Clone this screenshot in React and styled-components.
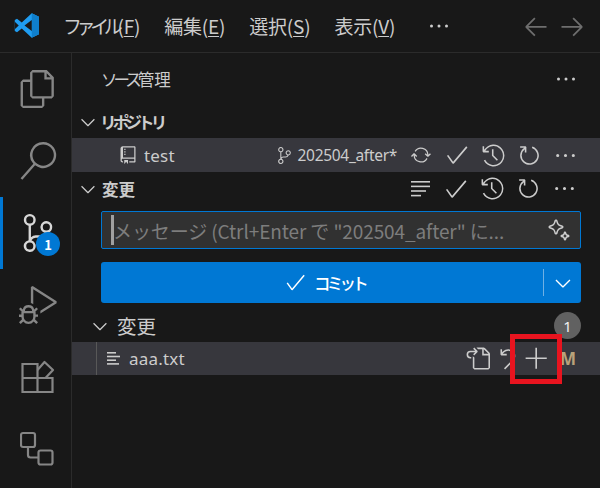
import React from 'react';
import styled, { createGlobalStyle } from 'styled-components';
import {
  VscFiles, VscSearch, VscSourceControl, VscDebugAlt, VscRepo, VscSync, VscCheck,
  VscHistory, VscRefresh, VscEllipsis, VscSparkle, VscGoToFile, VscDiscard, VscAdd, VscChevronDown,
  VscArrowLeft, VscArrowRight,
} from 'react-icons/vsc';

const Global = createGlobalStyle`
  html, body { margin: 0; padding: 0; background: #181818; }
  body { font-family: "Noto Sans CJK JP", "Noto Sans", sans-serif; color: #cccccc; }
  * { box-sizing: border-box; }
`;

const Window = styled.div`
  width: 600px; height: 488px; display: flex; flex-direction: column; overflow: hidden; background: #181818;
`;
const TitleBar = styled.header`
  height: 53px; flex: none; display: flex; align-items: center; padding: 0 14px 1px 14px;
  background: #181818; border-bottom: 1px solid #2b2b2b;
`;
const Menu = styled.nav`
  display: flex; align-items: center; gap: 24px; margin-left: 24px; flex: 1;
`;
const MenuItem = styled.span`
  font-size: 19px; letter-spacing: -0.2px; color: #cccccc; white-space: nowrap;
  u { text-underline-offset: 2px; text-decoration-thickness: 1px; }
`;
const Narrow = styled.span`
  letter-spacing: ${p => p.$track}px;
  margin-left: ${p => p.$pull || 0}px;
`;
const MenuDots = styled.span`
  display: flex; color: #cccccc; margin-left: 8px; font-size: 24px;
`;
const NavArrows = styled.div`
  display: flex; gap: 8px; color: #6e6e6e; font-size: 28px;
  svg { display: block; }
`;
const Body = styled.div`
  flex: 1; display: flex; min-height: 0;
`;
const ActivityBar = styled.aside`
  width: 72px; flex: none; display: flex; flex-direction: column; border-right: 1px solid #2b2b2b;
  background: #181818;
`;
const ActivityItem = styled.div`
  position: relative; height: 72px; flex: none; display: flex; align-items: center; justify-content: center;
  color: ${p => (p.$active ? '#d7d7d7' : '#868686')}; font-size: 38px;
  padding-left: 1px;
  border-left: 3px solid ${p => (p.$active ? '#0078d4' : 'transparent')};
  svg { display: block; }
`;
const ActivityBadge = styled.span`
  position: absolute; left: 33px; top: 35px; width: 24px; height: 24px; border-radius: 50%;
  background: #0078d4; color: #fff; font-size: 13px; font-weight: 700;
  display: flex; align-items: center; justify-content: center;
`;
const Sidebar = styled.main`
  position: relative; flex: 1; display: flex; flex-direction: column; min-width: 0;
`;
const PanelHeader = styled.div`
  height: 52px; flex: none; display: flex; align-items: center; justify-content: space-between;
  padding: 0 22px 0 29px; font-size: 16.5px; color: #cccccc;
`;
const Dots = styled.span`
  display: flex; font-size: 24px; color: #cccccc;
  svg { display: block; }
`;
const SectionHeader = styled.div`
  height: 33px; flex: none; display: flex; align-items: center; padding: 0 18px 0 5px;
  font-size: 16.5px; font-weight: 700; color: #cccccc;
`;
const Chevron = styled.span`
  display: flex; font-size: 22px; width: 25px; flex: none; color: #cccccc;
`;
const SectionTitle = styled.span`
  flex: 1; white-space: nowrap;
`;
const Row = styled.div`
  height: ${p => p.$h || 34}px; flex: none; display: flex; align-items: center; background: #37373d;
  padding-right: ${p => p.$pr || 18}px; color: #cccccc;
`;
const RepoIcon = styled.span`
  display: flex; font-size: 20px; margin-left: 46px; margin-right: 6px; color: #cccccc;
`;
const RowName = styled.span`
  font-family: "Noto Sans", sans-serif; font-size: 17px; letter-spacing: 0.2px; flex: 1; white-space: nowrap;
`;
const Branch = styled.span`
  display: flex; align-items: center; gap: 5px; font-family: "Noto Sans", sans-serif; font-size: 15.5px;
  letter-spacing: -0.3px; white-space: nowrap; margin-right: 6px;
`;
const IconGroup = styled.div`
  display: flex; align-items: center; flex: none;
`;
const IconCell = styled.span`
  width: ${p => p.$w || 36}px; height: 28px; display: flex; align-items: center; justify-content: center;
  font-size: ${p => p.$size || 25}px; color: #cccccc;
  svg { display: block; }
`;
const InputBox = styled.div`
  margin: 6px 19px 0 29px; height: 38px; flex: none; display: flex; align-items: center;
  background: #313131; border: 1px solid #0078d4; border-radius: 2px; padding: 0 9px;
`;
const Caret = styled.span`
  width: 3px; height: 30px; background: #a0a0a0; flex: none;
`;
const Placeholder = styled.span`
  flex: 1; margin-left: -1px; font-size: 19px; letter-spacing: -0.1px; color: #7d7d7d; white-space: nowrap; overflow: hidden;
`;
const Sparkle = styled.span`
  display: flex; font-size: 24px; color: #cccccc;
`;
const CommitButton = styled.div`
  margin: 13px 19px 0 29px; height: 41px; flex: none; display: flex; align-items: center;
  background: #0078d4; border-radius: 3px; color: #ffffff;
`;
const CommitMain = styled.div`
  flex: 1; display: flex; align-items: center; justify-content: center; gap: 7px; font-size: 16.5px;
  font-weight: 500; letter-spacing: -3.8px; padding-left: 5px;
  svg { font-size: 23px; display: block; }
`;
const Divider = styled.span`
  width: 1px; height: 27px; background: #6fb0e4; flex: none;
`;
const CommitChevron = styled.span`
  width: 37px; flex: none; display: flex; align-items: center; justify-content: center; font-size: 24px;
`;
const GroupHeader = styled.div`
  height: 33px; margin-top: 6px; flex: none; display: flex; align-items: center; padding: 0 0 0 17px;
  font-size: 19.5px; color: #cccccc;
`;
const GroupChevron = styled.span`
  display: flex; font-size: 22px; width: 28px; flex: none;
`;
const CountBadge = styled.span`
  position: absolute; left: 482px; top: 259px; width: 27px; height: 27px; border-radius: 50%;
  background: #616161; color: #f0f0f0; font-size: 15px; display: flex; align-items: center; justify-content: center;
  font-family: "Noto Sans", sans-serif;
`;
const IndentGuide = styled.span`
  align-self: stretch; width: 1px; background: #585858; margin-left: 24px; flex: none;
`;
const FileIcon = styled.span`
  display: flex; margin-left: 10px; margin-right: 9px; color: #cccccc;
`;
const StatusLetter = styled.span`
  width: 16px; margin-left: 8px; font-family: "Noto Sans", sans-serif; font-weight: 700; font-size: 17px; color: #b8a27a;
`;
const Highlight = styled.div`
  position: absolute; left: 438px; top: 281px; width: 52px; height: 50px; border: 5px solid #e8141f;
  pointer-events: none;
`;

const Lines = ({ w, h, sw, gap, cols }) => (
  <svg width={w} height={h} viewBox={`0 0 ${w} ${h}`} fill="none" stroke="currentColor" strokeWidth={sw}>
    {cols.map((c, i) => <line key={i} x1="0" x2={c} y1={sw / 2 + i * gap} y2={sw / 2 + i * gap} />)}
  </svg>
);

const Logo = () => (
  <svg width="25" height="25" viewBox="0 0 100 100">
    <path d="M71 99 L100 85 V15 L71 1 L31 38 L12 23 L3 28 V72 L12 77 L31 62 Z" fill="#1f9cf0" />
    <path d="M71 1 L100 15 V85 L71 99 Z" fill="#0f7fcc" />
    <path d="M71 28 V72 L42 50 Z M3 35 L19 50 L3 65 Z" fill="#181818" />
  </svg>
);

const Blocks = () => (
  <svg width="36" height="36" viewBox="0 0 36 36" fill="none" stroke="currentColor" strokeWidth="2.2">
    <path d="M2.5 5 H17.5 V33 H2.5 Z M2.5 19 H32.5 V33 H17.5" />
    <path d="M17.5 11 L24.5 3 L33 11 L25.5 19" strokeLinejoin="round" />
  </svg>
);

const Panels = () => (
  <svg width="36" height="36" viewBox="0 0 36 36" fill="none" stroke="currentColor" strokeWidth="2.2">
    <rect x="1" y="2" width="14" height="14" rx="2" />
    <rect x="18.5" y="19.5" width="14" height="14" rx="2" />
    <path d="M8 16 V24 Q8 26.5 10.5 26.5 H18.5" />
  </svg>
);

export default function App() {
  return (
    <Window>
      <Global />
      <TitleBar>
        <Logo />
        <Menu>
          <MenuItem><Narrow $track={-5.4}>ファイル</Narrow>(<u>F</u>)</MenuItem>
          <MenuItem>編集(<u>E</u>)</MenuItem>
          <MenuItem>選択(<u>S</u>)</MenuItem>
          <MenuItem>表示(<u>V</u>)</MenuItem>
          <MenuDots><VscEllipsis /></MenuDots>
        </Menu>
        <NavArrows><VscArrowLeft /><VscArrowRight /></NavArrows>
      </TitleBar>
      <Body>
        <ActivityBar>
          <ActivityItem><VscFiles /></ActivityItem>
          <ActivityItem><VscSearch /></ActivityItem>
          <ActivityItem $active>
            <VscSourceControl />
            <ActivityBadge>1</ActivityBadge>
          </ActivityItem>
          <ActivityItem><VscDebugAlt /></ActivityItem>
          <ActivityItem><Blocks /></ActivityItem>
          <ActivityItem><Panels /></ActivityItem>
        </ActivityBar>
        <Sidebar>
          <PanelHeader>
            <span><Narrow $track={-4}>ソース</Narrow>管理</span>
            <Dots><VscEllipsis /></Dots>
          </PanelHeader>
          <SectionHeader>
            <Chevron><VscChevronDown /></Chevron>
            <SectionTitle><Narrow $track={-3.8} $pull={-2}>リポジトリ</Narrow></SectionTitle>
          </SectionHeader>
          <Row $pr={17}>
            <RepoIcon><VscRepo /></RepoIcon>
            <RowName>test</RowName>
            <Branch><VscSourceControl size={17} />202504_after*</Branch>
            <IconGroup>
              <IconCell $size={20}><VscSync /></IconCell>
              <IconCell $size={26}><VscCheck /></IconCell>
              <IconCell><VscHistory /></IconCell>
              <IconCell><VscRefresh /></IconCell>
              <IconCell><VscEllipsis /></IconCell>
            </IconGroup>
          </Row>
          <SectionHeader>
            <Chevron><VscChevronDown /></Chevron>
            <SectionTitle>変更</SectionTitle>
            <IconGroup>
              <IconCell><Lines w={19} h={16} sw={1.6} gap={4.6} cols={[19, 19, 15, 10]} /></IconCell>
              <IconCell $size={26}><VscCheck /></IconCell>
              <IconCell><VscHistory /></IconCell>
              <IconCell><VscRefresh /></IconCell>
              <IconCell><VscEllipsis /></IconCell>
            </IconGroup>
          </SectionHeader>
          <InputBox>
            <Caret />
            <Placeholder>メッセージ (Ctrl+Enter で "202504_after" に...</Placeholder>
            <Sparkle><VscSparkle /></Sparkle>
          </InputBox>
          <CommitButton>
            <CommitMain><VscCheck />コミット</CommitMain>
            <Divider />
            <CommitChevron><VscChevronDown /></CommitChevron>
          </CommitButton>
          <GroupHeader>
            <GroupChevron><VscChevronDown /></GroupChevron>
            <span>変更</span>
          </GroupHeader>
          <CountBadge>1</CountBadge>
          <Row $h={33} $pr={24}>
            <IndentGuide />
            <FileIcon><Lines w={13} h={13} sw={1.6} gap={3.7} cols={[9, 13, 9, 12]} /></FileIcon>
            <RowName>aaa.txt</RowName>
            <IconGroup>
              <IconCell $w={30}><VscGoToFile /></IconCell>
              <IconCell $w={30}><VscDiscard /></IconCell>
              <IconCell $w={30} $size={26}><VscAdd /></IconCell>
            </IconGroup>
            <StatusLetter>M</StatusLetter>
          </Row>
          <Highlight />
        </Sidebar>
      </Body>
    </Window>
  );
}
